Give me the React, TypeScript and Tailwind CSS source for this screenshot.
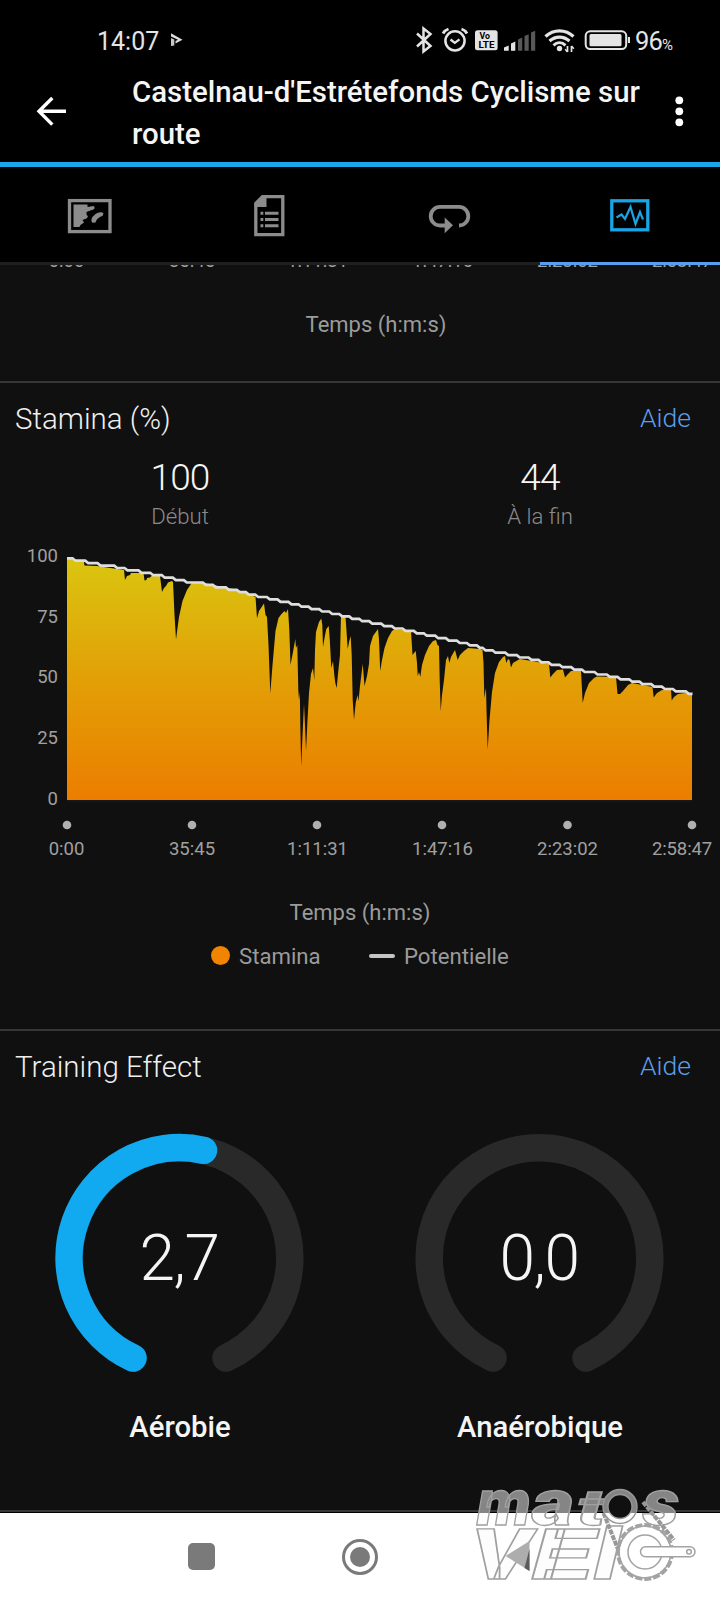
import React from 'react';

// ─── Data ───────────────────────────────────────────────────────────────────

const TIME_LABELS = ['0:00', '35:45', '1:11:31', '1:47:16', '2:23:02', '2:58:47'];
const PERCENT_LABELS = ['100', '75', '50', '25', '0'];
const TICKS = [67, 192, 317, 442, 567.5, 692];

// x of every one percent drop of the potential, from 100 down to 44
const POTENTIAL_DROPS = [
  74, 86.7, 99, 115.7, 126, 140, 151.7, 163.3, 174.3, 185.3, 204.3, 214.3, 227.3, 238.3, 247.3, 256.7,
  268.3, 279, 290, 300, 310, 320.7, 330.7, 340.7, 350.7, 360.7, 370.7, 382.7, 393.3, 404, 415.3, 425.3,
  436.7, 447.3, 458.3, 468.3, 478.3, 484, 494, 506.7, 518.3, 530, 540, 550, 561, 572.7, 583.3, 596,
  608.3, 619, 630.7, 641, 652.7, 663.3, 674.3, 687.3,
];

const STAMINA =
  '67,558.5 83.7,561 84.5,565.5 97,566 124,570 125,580 127,576 130,575 131,573 139,573 143.5,573.3 ' +
  '144.5,580.5 146.5,580 147,578 150,577.5 152,575.5 160,576 162,592 164,588 166,586 168,582.5 172,581 ' +
  '173,582 174.5,615 176,639.5 179,617 182.5,601 187,590 190,585.5 192,582.5 204,583 238,590 255.5,597 ' +
  '257,618.3 259,611 262,606.5 264,603.5 265.5,615 267,617 268.5,645 270.3,693.5 272.5,665 275.5,631 ' +
  '278.5,618 281.5,614 284.5,611 286,613 288,609 289.3,630 290.5,665 293,652 295.3,639 296,648 297.3,645 ' +
  '298.3,690 299,700 299.8,692 300.3,725 301.2,766.5 302.5,735 304,704 305,725 306,751 307.5,720 309,693 ' +
  '311,674 313,668 314.3,680 315,650 316,632 319,622 321.3,618.5 322.3,625 323,647 324.7,637 326.3,629 ' +
  '328.7,626 329.8,640 331.3,668 333,661 334.3,675 335.3,683 336.7,688 338,674 340,655 341,615 345.5,617 ' +
  '346.3,628 347.7,649 349.3,641 350.7,636 351.7,655 352.7,700 354,720 355.7,703 357.5,695 358.5,701 ' +
  '360,686 362.7,664 364.5,686 367,676 369,664 370,646 373,636 378,629 379,640 380.2,671 382,660 384.5,648 ' +
  '388,638 392,631 395,629 411,631 412.5,655 414,653 415.7,651 417,663 417.7,676 419,672 420.3,677 422,665 ' +
  '425,655 429,646 433,641 436,640 437.5,645 439,646 439.7,680 440.7,711.5 442,695 444,680 446,660 448,656 ' +
  '449.3,663 451,657 455,650 457.7,660 460,655 464,651 468,648 480,649 482.5,650 483.5,663 484.3,698 ' +
  '486,688 486.5,710 487.7,749.5 489.5,720 492,692 495,673 499,662 503,657 505,656 506.3,663 508,659 ' +
  '509.5,660 511,667.5 513,663 518,660 520,659 549,664 550.3,677.5 553,674 557,670 563,669.5 565,677.5 ' +
  '568,674 571,671 581,671 582.7,703 585,693 589,683 594,678 597,676.5 616,677 617.5,694 620,694 623,691 ' +
  '628,685 632,683 652.5,687 653.7,697.5 657,693 662,690 671,690 671.7,700.5 674,697 678,694 685,693 692,694';

function potentialPath(): string {
  const points = ['M67 558.3'];
  let y = 558.3;
  POTENTIAL_DROPS.forEach((x) => {
    points.push(`L${x - 1.5} ${y.toFixed(1)}`);
    y += 2.42;
    points.push(`L${x + 1.5} ${y.toFixed(1)}`);
  });
  points.push(`L692.5 ${y.toFixed(1)}`);
  return points.join(' ');
}

// ─── Status bar ─────────────────────────────────────────────────────────────

function StatusBar() {
  return (
    <div className="flex h-[72px] items-start bg-black pt-[26px] text-[#e4e4e4]">
      <span className="mt-px ml-[97px] w-[62px] text-[25px] leading-[30px] whitespace-nowrap">14:07</span>
      <svg className="mt-[6px] ml-[11px] h-4 w-[14px]" viewBox="0 0 14 16">
        <path d="M1 1.300 12.500 7.700 5.500 11.500 5.500 9 8 7.700 1 4.500z" fill="#dcdcdc" />
        <path d="M1 6l3.300 1.500V13.500L1 14z" fill="#c8c8c8" />
      </svg>

      <svg className="ml-[230px] h-[28px] w-[216px]" viewBox="414 26 216 28" fill="none" stroke="#e4e4e4">
        {/* Bluetooth */}
        <path d="M417 33.5 430.5 46l-7 5.500V28.500l7 5.500L417 46.500" strokeWidth="2.500" />
        {/* Alarm */}
        <circle cx="455" cy="40.800" r="9.600" strokeWidth="2.500" />
        <path d="M450.500 39.500l4.300 3.400 4.700-3.600" strokeWidth="2.300" />
        <path d="M443 33.500c1-2 3-3.700 5.500-4.500M467 33.500c-1-2-3-3.700-5.500-4.500" strokeWidth="2.800" />
        {/* VoLTE */}
        <rect x="475" y="30.300" width="22.600" height="20" rx="2.500" fill="#e4e4e4" stroke="none" />
        <g className="font-bold" fill="#000" stroke="none">
          <text x="479.500" y="39.300" textLength="10.500" lengthAdjust="spacingAndGlyphs" fontSize="9">
            Vo
          </text>
          <text x="478.500" y="48.300" textLength="16" lengthAdjust="spacingAndGlyphs" fontSize="9.500">
            LTE
          </text>
        </g>
        {/* Signal */}
        <g stroke="none">
          <path d="M504 47.500l4.700-2v5.200H504z" fill="#e4e4e4" />
          <path d="M511 43.500l4.300-2v9.200H511z" fill="#e4e4e4" />
          <path d="M518 39.500l4.200-2v13.200H518z" fill="#585858" />
          <path d="M524.500 36l4.200-1.700v16.400h-4.200z" fill="#585858" />
          <path d="M531 32.500l4.200-1.700v19.900H531z" fill="#585858" />
        </g>
        {/* Wifi */}
        <path d="M545.500 36.500c8-7.500 20-7.500 28 0" strokeWidth="3.200" />
        <path d="M549.500 41c6-5.300 14-5.300 20 0" strokeWidth="3.200" />
        <path d="M553.500 45.300c3.600-3.300 8.400-3.300 12 0" strokeWidth="3" />
        <circle cx="559.500" cy="48.500" r="2.700" fill="#e4e4e4" stroke="none" />
        <path d="M567.500 46v6M571.500 46v6" strokeWidth="1.700" />
        <path d="M567.500 52l-2.300-2.700M571.500 46l2.300 2.700" strokeWidth="1.500" />
        {/* Battery */}
        <rect x="585.700" y="31.300" width="40.500" height="17.700" rx="4.500" strokeWidth="2" />
        <rect x="589.500" y="34" width="32" height="12.300" rx="1.500" fill="#e4e4e4" stroke="none" />
        <path d="M629 37v6" strokeWidth="2.200" />
      </svg>
      <span className="ml-[5px] text-[25.500px] leading-[30px] tracking-[-0.800px]">
        96<span className="text-[15px] tracking-normal">%</span>
      </span>
    </div>
  );
}

// ─── App bar ────────────────────────────────────────────────────────────────

function AppBar() {
  return (
    <header className="flex h-[90px] bg-black">
      <svg className="mt-[24px] ml-[36px] h-[30px] w-[32px]" viewBox="0 0 32 30">
        <path d="M30 15.300H4M16.300 2 3 15.300l13.300 13.300" fill="none" stroke="#fff" strokeWidth="3.400" />
      </svg>
      <h1 className="mt-[-1px] ml-[64px] w-[520px] text-[29.400px] leading-[42px] font-medium text-[#f5f5f5]">
        Castelnau-d'Estrétefonds Cyclisme sur route
      </h1>
      <svg className="mt-[24px] ml-[19px] h-[32px] w-[16px]" viewBox="0 0 16 32">
        <circle cx="8.300" cy="4.300" r="3.900" fill="#fff" />
        <circle cx="8.300" cy="15.300" r="3.900" fill="#fff" />
        <circle cx="8.300" cy="26.300" r="3.900" fill="#fff" />
      </svg>
    </header>
  );
}

// ─── Tabs ───────────────────────────────────────────────────────────────────

function Tabs() {
  return (
    <nav className="grid h-[103px] grid-cols-4 border-t-[5px] border-[#18a5ea] bg-black">
      <div className="flex justify-center border-b-[3px] border-[#1f1f1f] pt-[31px]">
        <svg className="h-[36px] w-[46px]" viewBox="0 0 46 36">
          <rect x="2.500" y="2.600" width="40.500" height="31" fill="none" stroke="#8c8c8c" strokeWidth="3.300" />
          <path
            d="M6.500 6.500H20.500V9L26.500 8C29 10 27 12 24 12.300L19.500 14V16.500L21 18.500 19.500 20.500 15.500 22 17 24.500 13.500 27 12.500 29H6.500z"
            fill="#8c8c8c"
          />
          <path d="M36.500 15.500c-1.500-2-6-1.500-9 1.500-3 2.300-4 5.500-2 7.800l3-.300c1-3 2.500-5 7-6.500z" fill="#8c8c8c" />
        </svg>
      </div>
      <div className="flex justify-center border-b-[3px] border-[#1f1f1f] pt-[27px]">
        <svg className="h-[44px] w-[34px]" viewBox="0 0 34 44">
          <path d="M9.500 2.700H29.800V40.700H2.800V9.500z" fill="none" stroke="#8c8c8c" strokeWidth="3.300" />
          <path d="M1.500 9.500 9.500 1h4v12h-12z" fill="#8c8c8c" />
          <path
            d="M7.500 19.300h2.800M12 19.300h13.500M7.500 25.500h2.800M12 25.500h13.500M7.500 31.700h2.800M12 31.700h13.500"
            stroke="#8c8c8c"
            strokeWidth="3"
          />
        </svg>
      </div>
      <div className="flex justify-center border-b-[3px] border-[#1f1f1f] pt-[36px]">
        <svg className="h-[32px] w-[44px]" viewBox="0 0 44 32">
          <path
            d="M17 22.500H12a9.300 9.300 0 0 1 0-18.600h19a9.300 9.300 0 0 1 0 18.600"
            fill="none"
            stroke="#8c8c8c"
            strokeWidth="3.800"
          />
          <path d="M16.700 14.500l8.300 7.700-8.300 8z" fill="#8c8c8c" />
        </svg>
      </div>
      <div className="flex justify-center border-b-[3px] border-[#569ff0] pt-[32px]">
        <svg className="h-[33px] w-[40px]" viewBox="0 0 40 33" fill="none" stroke="#18a5e6">
          <rect x="1.800" y="1.800" width="36" height="29" strokeWidth="3.300" />
          <path d="M6.500 18.500 11.500 15.500 15 20 20.500 8 25.500 25 30 13 33 20.500" strokeWidth="2.200" />
        </svg>
      </div>
    </nav>
  );
}

// ─── Shared bits ────────────────────────────────────────────────────────────

function TimeLabels() {
  return (
    <div className="flex h-6 text-center text-[18.500px] leading-6 text-[#a0a0a0]">
      <span className="ml-[4px] w-[125px]">{TIME_LABELS[0]}</span>
      <span className="w-[126px]">{TIME_LABELS[1]}</span>
      <span className="w-[125px]">{TIME_LABELS[2]}</span>
      <span className="w-[125px]">{TIME_LABELS[3]}</span>
      <span className="w-[125px]">{TIME_LABELS[4]}</span>
      <span className="ml-[20px] w-[64px] tracking-[-0.100px]">{TIME_LABELS[5]}</span>
    </div>
  );
}

function SectionHeader({ title }: { title: string }) {
  return (
    <div className="flex h-[72px] items-center justify-between pr-[29px] pl-[15px]">
      <h2 className="text-[29.500px] font-light text-[#efefef]">{title}</h2>
      <a className="mt-[-2px] text-[26.500px] font-light text-[#5b9fea]">Aide</a>
    </div>
  );
}

function Stat({ value, label }: { value: string; label: string }) {
  return (
    <div className="flex flex-col items-center">
      <span className="mt-px text-[37px] leading-[44px] font-light tracking-[-0.800px] text-[#f5f5f5]">{value}</span>
      <span className="mt-[2px] text-[22.200px] leading-[28px] font-light text-[#8a8a8a]">{label}</span>
    </div>
  );
}

// ─── Stamina chart ──────────────────────────────────────────────────────────

function StaminaChart() {
  return (
    <div className="flex h-[302px]">
      <div className="flex w-[58px] flex-col text-right text-[18.500px] leading-[24px] text-[#a0a0a0]">
        {PERCENT_LABELS.map((label) => (
          <span key={label} className="mb-[36.700px]">
            {label}
          </span>
        ))}
      </div>
      <svg className="h-[302px] w-[662px]" viewBox="58 544 662 302">
        <defs>
          <linearGradient id="stamina" x1="0" y1="558" x2="0" y2="800" gradientUnits="userSpaceOnUse">
            <stop offset="0" stopColor="#dac510" />
            <stop offset="0.500" stopColor="#e2a006" />
            <stop offset="1" stopColor="#ec7d00" />
          </linearGradient>
        </defs>
        <polygon points={`67,800 ${STAMINA} 692,800`} fill="url(#stamina)" />
        <path d={potentialPath()} fill="none" stroke="#dedede" strokeWidth="2.700" />
        <path d="M67 801h625" stroke="#1c1c1c" />
        {TICKS.map((x) => (
          <circle key={x} cx={x} cy="825" r="4.300" fill="#b0b0b0" />
        ))}
      </svg>
    </div>
  );
}

// ─── Training effect gauge ──────────────────────────────────────────────────

function Gauge({ value, label, filled }: { value: string; label: string; filled?: boolean }) {
  return (
    <div className="flex flex-col items-center">
      <div className="grid h-[250px] w-[250px] place-items-center">
        <svg className="col-start-1 row-start-1 h-[250px] w-[250px]" viewBox="-124.500 -125 250 250">
          <g fill="none" strokeWidth="27.500" strokeLinecap="round">
            <path d="M-46.500 100A110.300 110.300 0 1 1 46.500 100" stroke="#292929" />
            {filled && <path d="M-46.500 100A110.300 110.300 0 0 1 24 -107.700" stroke="#11a9ef" />}
          </g>
        </svg>
        <span className="col-start-1 row-start-1 pt-[2px] pr-[2px] text-[64px] leading-[76px] font-light tracking-[-1.500px] text-[#f5f5f5]">
          {value}
        </span>
      </div>
      <span className="mt-[26px] text-[29.300px] leading-[36px] font-medium text-[#f5f5f5]">{label}</span>
    </div>
  );
}

// ─── Watermark ──────────────────────────────────────────────────────────────

function Watermark() {
  return (
    <svg className="absolute top-[1480px] left-[470px] h-[110px] w-[236px]" viewBox="470 1480 236 110">
      <defs>
        {/* The upper word is grey on the dark page and white on the navigation bar */}
        <linearGradient id="wordmark" x1="0" y1="1480" x2="0" y2="1590" gradientUnits="userSpaceOnUse">
          <stop offset="0.300" stopColor="#858585" />
          <stop offset="0.300" stopColor="#fdfdfd" />
        </linearGradient>
      </defs>
      <g className="font-black italic" fill="url(#wordmark)" stroke="#a0a0a0" strokeWidth="1.300">
        <text y="1525" fontSize="64">
          <tspan x="477" textLength="54" lengthAdjust="spacingAndGlyphs">
            m
          </tspan>
          <tspan x="532" textLength="42" lengthAdjust="spacingAndGlyphs">
            a
          </tspan>
          <tspan x="577" fontSize="50" textLength="28" lengthAdjust="spacingAndGlyphs">
            t
          </tspan>
          <tspan x="643" textLength="36" lengthAdjust="spacingAndGlyphs">
            s
          </tspan>
        </text>
        <text y="1579" fontSize="71">
          <tspan x="471" textLength="60" lengthAdjust="spacingAndGlyphs">
            V
          </tspan>
          <tspan x="532" textLength="61" lengthAdjust="spacingAndGlyphs">
            E
          </tspan>
          <tspan x="594" textLength="26" lengthAdjust="spacingAndGlyphs">
            l
          </tspan>
        </text>
      </g>
      <path d="M505.500 1556l24-15v30z" fill="#adadad" />
      <path d="M529.500 1549v22l-5-3z" fill="#5a5a5a" />
      <g fill="none">
        {/* Chain */}
        <path d="M603.500 1513l20 50M643 1502l31 38" stroke="#989898" strokeWidth="4" strokeDasharray="5 1" />
        {/* Chainring */}
        <circle cx="645" cy="1552" r="26" fill="#fff" stroke="#a3a3a3" strokeWidth="1.500" />
        <circle cx="645" cy="1552" r="27" stroke="#a3a3a3" strokeWidth="4" strokeDasharray="7 2" />
        <circle cx="645" cy="1552" r="17" stroke="#a3a3a3" strokeWidth="1.500" />
        {/* Sprocket */}
        <circle cx="620" cy="1506.500" r="14.500" fill="#101010" stroke="url(#wordmark)" strokeWidth="5" />
        <circle cx="620" cy="1506.500" r="17" stroke="#989898" strokeWidth="1.500" />
        <circle cx="620" cy="1506.500" r="12" stroke="#989898" strokeWidth="1.300" />
        {/* Crank arm */}
        <rect x="640.500" y="1546.700" width="54.500" height="10" rx="5" fill="#fff" stroke="#a3a3a3" strokeWidth="1.500" />
        <circle cx="689" cy="1551.700" r="2.300" stroke="#a3a3a3" strokeWidth="1.500" />
      </g>
    </svg>
  );
}

// ─── App ────────────────────────────────────────────────────────────────────

export default function App() {
  return (
    <div className="relative h-[1600px] w-[720px] overflow-hidden bg-[#101010] font-[Roboto,sans-serif]">
      <StatusBar />
      <AppBar />
      <Tabs />

      {/* Tail of the previous chart, scrolled under the tabs */}
      <section className="h-[116px] overflow-hidden">
        <div className="mt-[-16px]">
          <TimeLabels />
        </div>
        <p className="mt-[38px] ml-[32px] text-center text-[22px] leading-[28px] text-[#9b9b9b]">Temps (h:m:s)</p>
      </section>

      {/* Stamina */}
      <section className="h-[648px] border-t-2 border-[#363636]">
        <SectionHeader title="Stamina (%)" />
        <div className="grid h-[89px] grid-cols-2">
          <Stat value="100" label="Début" />
          <Stat value="44" label="À la fin" />
        </div>
        <StaminaChart />
        <div className="mt-[-9px]">
          <TimeLabels />
        </div>
        <p className="mt-[38px] text-center text-[22px] leading-[28px] text-[#9b9b9b]">Temps (h:m:s)</p>
        <div className="mt-[14px] flex items-center text-[22.200px] leading-[28px] text-[#9b9b9b]">
          <span className="ml-[211px] h-[19px] w-[19px] rounded-full bg-[#f18400]" />
          <span className="mt-px ml-[9px] w-[130px]">Stamina</span>
          <span className="h-[4px] w-[26px] rounded-full bg-[#c4c4c4]" />
          <span className="mt-px ml-[9px]">Potentielle</span>
        </div>
      </section>

      {/* Training effect */}
      <section className="h-[481px] border-t-2 border-[#363636]">
        <SectionHeader title="Training Effect" />
        <div className="grid grid-cols-2 pt-[30px]">
          <Gauge value="2,7" label="Aérobie" filled />
          <Gauge value="0,0" label="Anaérobique" />
        </div>
      </section>

      {/* System navigation */}
      <div className="h-[3px] border-t-2 border-[#3a3839] bg-black" />
      <footer className="flex h-[87px] items-center bg-white">
        <span className="ml-[188px] h-[27px] w-[27px] rounded-[5px] bg-[#7a7a7a]" />
        <span className="ml-[127px] grid h-9 w-9 place-items-center rounded-full border-[3px] border-[#7a7a7a]">
          <span className="h-5 w-5 rounded-full bg-[#7a7a7a]" />
        </span>
      </footer>

      <Watermark />
    </div>
  );
}
